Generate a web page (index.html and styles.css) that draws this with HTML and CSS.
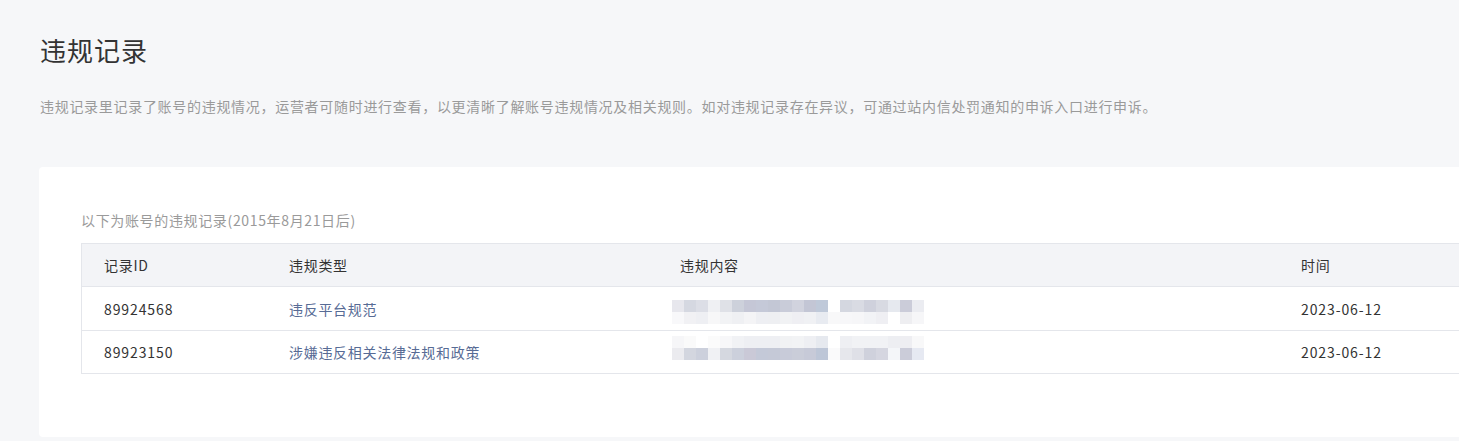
FILE: index.html
```html
<!DOCTYPE html>
<html lang="zh-CN">
<head>
<meta charset="utf-8">
<title>违规记录</title>
<link rel="stylesheet" href="styles.css">
</head>
<body>
<div class="page">
  <h1 class="title">违规记录</h1>
  <p class="desc">违规记录里记录了账号的违规情况，运营者可随时进行查看，以更清晰了解账号违规情况及相关规则。如对违规记录存在异议，可通过站内信处罚通知的申诉入口进行申诉。</p>
  <div class="card">
    <div class="subtitle">以下为账号的违规记录(2015年8月21日后)</div>
    <div class="table">
      <div class="row head">
        <div class="cell">记录ID</div>
        <div class="cell">违规类型</div>
        <div class="cell">违规内容</div>
        <div class="cell">时间</div>
      </div>
      <div class="row">
        <div class="cell num">89924568</div>
        <div class="cell type">违反平台规范</div>
        <div class="cell"><div class="blur blur-1" aria-hidden="true"></div></div>
        <div class="cell num">2023-06-12</div>
      </div>
      <div class="row">
        <div class="cell num">89923150</div>
        <div class="cell type">涉嫌违反相关法律法规和政策</div>
        <div class="cell"><div class="blur blur-2" aria-hidden="true"></div></div>
        <div class="cell num">2023-06-12</div>
      </div>
    </div>
  </div>
</div>
</body>
</html>
```

FILE: styles.css
```css
html, body {
  margin: 0;
  padding: 0;
  background: #f6f7f9;
  overflow: hidden;
}

body {
  font-family: "Noto Sans CJK SC", "Noto Sans", sans-serif;
  color: #333;
}

.page {
  width: 1560px;
  padding: 32px 0 0 39px;
  box-sizing: border-box;
}

.title {
  margin: 0 0 0 1px;
  font-size: 26px;
  font-weight: 400;
  line-height: 36px;
  color: #333;
  letter-spacing: 1px;
}

.desc {
  margin: 27px 0 0 1px;
  font-size: 14px;
  line-height: 22px;
  color: #9a9a9a;
  letter-spacing: 0.7px;
}

.card {
  margin-top: 50px;
  background: #fff;
  border-radius: 4px;
  padding: 42px 0 63px 42px;
  height: 270px;
  box-sizing: border-box;
}

.subtitle {
  font-size: 14px;
  line-height: 22px;
  color: #9a9a9a;
  letter-spacing: 0.65px;
  margin-bottom: 12px;
}

.table {
  border: 1px solid #e4e6eb;
  border-right: none;
}

.row {
  display: grid;
  grid-template-columns: 185px 391px 621px 1fr;
  height: 43px;
  align-items: center;
  font-size: 14px;
  letter-spacing: 0.7px;
  border-top: 1px solid #e4e6eb;
}

.row:last-child {
  height: 42px;
}

.row.head {
  height: 42px;
  border-top: none;
  background: #f3f4f7;
}

.cell {
  padding-left: 22px;
  white-space: nowrap;
}

.num {
  letter-spacing: 0.9px;
}

.type {
  color: #576b95;
}

.blur {
  width: 252px;
  height: 24px;
  margin-left: -8px;
  background-repeat: no-repeat;
  background-size: 100% 12px, 100% 12px;
  background-position: 0 0, 0 12px;
}

.blur-1 {
  margin-top: 6px;
  background-image:
    linear-gradient(to right,
      #e7e7ed 0 12px, #d5d8e1 12px 24px, #dcdee6 24px 36px, #eff0f3 36px 48px,
      #dfe1e7 48px 60px, #cdd1db 60px 72px, #c5c7d6 72px 84px, #c5c9d8 84px 96px,
      #c3c7d5 96px 108px, #c9ccd9 108px 120px, #d1d3de 120px 132px, #c3c6d5 132px 144px,
      #bfc9d9 144px 156px, #ffffff 156px 168px, #d4d7e0 168px 180px, #d9dbe3 180px 192px,
      #cfd1dc 192px 204px, #d8dae2 204px 216px, #e6e9ef 216px 228px, #cbccd9 228px 240px,
      #ebecf1 240px 252px),
    linear-gradient(to right,
      #f8f8fa 0 12px, #f1f1f4 12px 24px, #eeeff3 24px 36px, #f7f7f8 36px 48px,
      #f2f3f5 48px 60px, #eff0f3 60px 72px, #f4f4f6 72px 84px, #eeeff3 84px 96px,
      #eeeff2 96px 108px, #f1f2f4 108px 120px, #efeff3 120px 132px, #f0f1f4 132px 144px,
      #e8ebf1 144px 156px, #f8f8f9 156px 168px, #f7f7f9 168px 180px, #f6f6f8 180px 192px,
      #f2f3f6 192px 204px, #efeff3 204px 216px, #ffffff 216px 228px, #eeeef1 228px 240px,
      #f6f6f8 240px 252px);
}

.blur-2 {
  margin-top: -8px;
  background-image:
    linear-gradient(to right,
      #f6f6f8 0 12px, #fafafa 12px 24px, #ffffff 24px 36px, #fbfbfb 36px 48px,
      #f7f7f9 48px 60px, #f1f2f5 60px 72px, #eeeff3 72px 84px, #eeeff3 84px 96px,
      #eeeff3 96px 108px, #f1f2f4 108px 120px, #f2f3f5 120px 132px, #eeeff3 132px 144px,
      #e6e9ef 144px 156px, #ffffff 156px 168px, #eeeff3 168px 180px, #f1f2f5 180px 192px,
      #f1f2f5 192px 204px, #f1f2f5 204px 216px, #edeef2 216px 228px, #eeeef2 228px 240px,
      #f8f8f9 240px 252px),
    linear-gradient(to right,
      #ebebef 0 12px, #d3d6df 12px 24px, #ccd0dc 24px 36px, #f0f1f4 36px 48px,
      #d5d8e0 48px 60px, #ccd0dc 60px 72px, #cac9d7 72px 84px, #c4c9d8 84px 96px,
      #c5c9d7 96px 108px, #c8cbd9 108px 120px, #cacdd9 120px 132px, #c7cad8 132px 144px,
      #bdc6d7 144px 156px, #fafafb 156px 168px, #e6e7ec 168px 180px, #dfe0e7 180px 192px,
      #cfd1dc 192px 204px, #d5d6e0 204px 216px, #f4f6f9 216px 228px, #cbccd9 228px 240px,
      #e6e9f2 240px 252px);
}
```
